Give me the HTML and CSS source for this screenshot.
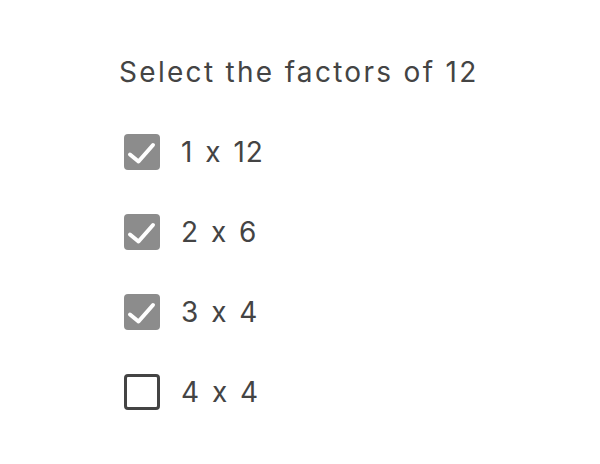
FILE: index.html
```html
<!DOCTYPE html>
<html lang="en">

<head>
    <meta charset="UTF-8">
    <meta name="viewport" content="width=device-width, initial-scale=1.0">
    <title>Factors</title>
    <link rel="stylesheet" href="styles.css">
</head>

<body>
    <div class="quiz">
        <div class="question">Select the factors of 12</div>

        <label class="option">
            <input type="checkbox" checked>
            <span class="box">
                <svg viewBox="0 0 36 36" width="36" height="36">
                    <path d="M6 20.5 L14.5 27.5 L29 11" fill="none" stroke="#fff" stroke-width="4" stroke-linecap="round" stroke-linejoin="round" />
                </svg>
            </span>
            <span class="text">1 x 12</span>
        </label>

        <label class="option">
            <input type="checkbox" checked>
            <span class="box">
                <svg viewBox="0 0 36 36" width="36" height="36">
                    <path d="M6 20.5 L14.5 27.5 L29 11" fill="none" stroke="#fff" stroke-width="4" stroke-linecap="round" stroke-linejoin="round" />
                </svg>
            </span>
            <span class="text">2 x 6</span>
        </label>

        <label class="option">
            <input type="checkbox" checked>
            <span class="box">
                <svg viewBox="0 0 36 36" width="36" height="36">
                    <path d="M6 20.5 L14.5 27.5 L29 11" fill="none" stroke="#fff" stroke-width="4" stroke-linecap="round" stroke-linejoin="round" />
                </svg>
            </span>
            <span class="text">3 x 4</span>
        </label>

        <label class="option">
            <input type="checkbox">
            <span class="box">
                <svg viewBox="0 0 36 36" width="36" height="36">
                    <path d="M6 20.5 L14.5 27.5 L29 11" fill="none" stroke="#fff" stroke-width="4" stroke-linecap="round" stroke-linejoin="round" />
                </svg>
            </span>
            <span class="text">4 x 4</span>
        </label>
    </div>
</body>

</html>
```

FILE: styles.css
```css
body {
    margin: 0;
    font-family: 'Inter', 'Liberation Sans', sans-serif;
    font-feature-settings: "calt" 0;
    background-color: #fff;
    color: #444;
}

.quiz {
    display: flex;
    flex-direction: column;
    padding: 32px 0 0 119px;
}

.question {
    height: 80px;
    display: flex;
    align-items: center;
    font-size: 28px;
    letter-spacing: 2.3px;
}

.option {
    height: 80px;
    display: flex;
    align-items: center;
    gap: 21px;
    padding-left: 5px;
    cursor: pointer;
}

/* hide the real checkbox, draw our own */
.option input {
    display: none;
}

.box {
    width: 36px;
    height: 36px;
    box-sizing: border-box;
    border: 3.5px solid #444;
    border-radius: 4px;
    display: flex;
    align-items: center;
    justify-content: center;
}

.box svg {
    display: none;
    flex-shrink: 0;
}

.option input:checked + .box {
    background-color: #8c8c8c;
    border: none;
}

.option input:checked + .box svg {
    display: block;
}

.text {
    font-size: 28px;
    letter-spacing: 1px;
    word-spacing: 3px;
}
```
